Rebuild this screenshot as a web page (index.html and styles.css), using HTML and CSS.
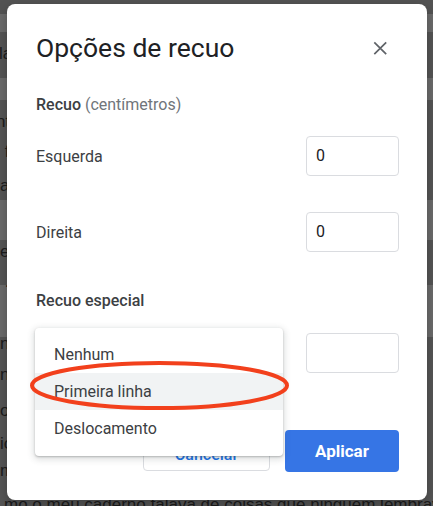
FILE: index.html
```html
<!DOCTYPE html>
<html lang="pt">
<head>
<meta charset="utf-8">
<title>Opções de recuo</title>
<link rel="stylesheet" href="styles.css">
</head>
<body>
<div class="doc">
  <div class="doc-col doc-left">
    <div class="frag f-la">la</div>
    <div class="frag f-t">nt</div>
    <div class="frag f-f">&nbsp;f</div>
    <div class="frag f-a">a</div>
    <div class="frag f-e">e</div>
    <div class="frag f-dot">&nbsp;.</div>
    <div class="frag f-nc">nc</div>
    <div class="frag f-nt">nt</div>
    <div class="frag f-or">or</div>
    <div class="frag f-ic">ic</div>
    <div class="frag f-m">m</div>
    <div class="frag f-last">mo o meu caderno falava de coisas que ninguém lembrava</div>
  </div>
  <div class="doc-col doc-right">
    <div class="frag r-e">en</div>
    <div class="frag r-i">ir</div>
    <div class="frag r-el">el</div>
    <div class="frag r-a">á</div>
    <div class="frag r-es">es</div>
  </div>
</div>

<div class="dialog" role="dialog" aria-label="Opções de recuo">
  <div class="dialog-header">
    <h1 class="dialog-title">Opções de recuo</h1>
    <span class="close-btn" aria-label="Fechar">
      <svg width="24" height="24" viewBox="0 0 24 24"><path d="M6.3 6.3 L18.2 18.2 M18.2 6.3 L6.3 18.2" stroke="#5f6368" stroke-width="1.7" fill="none"/></svg>
    </span>
  </div>

  <div class="section-label"><span class="strong">Recuo</span> <span class="muted">(centímetros)</span></div>

  <div class="field-row first-row">
    <span class="field-label">Esquerda</span>
    <div class="num-input">0</div>
  </div>

  <div class="field-row second-row">
    <span class="field-label">Direita</span>
    <div class="num-input">0</div>
  </div>

  <div class="section-label special-label"><span class="strong">Recuo especial</span></div>

  <div class="field-row third-row">
    <div class="select-box"></div>
    <div class="num-input"></div>
  </div>

  <div class="actions">
    <button class="btn btn-cancel">Cancelar</button>
    <button class="btn btn-apply">Aplicar</button>
  </div>

  <div class="menu">
    <div class="menu-item">Nenhum</div>
    <div class="menu-item selected">Primeira linha</div>
    <div class="menu-item">Deslocamento</div>
  </div>

  <svg class="highlight-ring" width="267" height="60" viewBox="0 0 267 60">
    <ellipse cx="133.5" cy="30.5" rx="127.5" ry="22.5" fill="none" stroke="#f2401c" stroke-width="4"/>
  </svg>
</div>
</body>
</html>
```

FILE: styles.css
```css
* { box-sizing: border-box; }

html, body {
  margin: 0;
  padding: 0;
}

body {
  width: 433px;
  height: 506px;
  overflow: hidden;
  background: #6b6b6b;
  font-family: Roboto, "Liberation Sans", Arial, sans-serif;
}

/* dimmed document behind the dialog */
.doc {
  display: flex;
  height: 506px;
  overflow: hidden;
}

.doc-col {
  flex: 1 1 0;
  display: flex;
  flex-direction: column;
  font-family: "Liberation Sans", Arial, sans-serif;
  font-size: 17px;
  line-height: 20px;
  color: #1c1c1c;
  white-space: nowrap;
}

.doc-left {
  background: linear-gradient(to bottom,
    #535353 0, #535353 14px,
    #6b6b6b 14px, #6b6b6b 32px,
    #555555 32px, #555555 78px,
    #6b6b6b 78px, #6b6b6b 100px,
    #555555 100px, #555555 200px,
    #6b6b6b 200px, #6b6b6b 240px,
    #555555 240px, #555555 285px,
    #6b6b6b 285px, #6b6b6b 337px,
    #555555 337px, #555555 506px);
}

.doc-right {
  padding-left: 211px;
  background: linear-gradient(to bottom,
    #6e6e6e 0, #6e6e6e 98px,
    #575757 98px, #575757 180px,
    #6e6e6e 180px, #6e6e6e 230px,
    #575757 230px, #575757 305px,
    #6e6e6e 305px, #6e6e6e 506px);
}

.f-la { margin-top: 44px; margin-left: -1px; }
.f-t { margin-top: 48px; margin-left: -4px; }
.f-f { margin-top: 10px; }
.f-a { margin-top: 14px; }
.f-e { margin-top: 46px; }
.f-dot { margin-top: 10px; }
.f-nc { margin-top: 42px; }
.f-nt { margin-top: 11px; }
.f-or { margin-top: 16px; }
.f-ic { margin-top: 13px; }
.f-m { margin-top: 7px; }
.f-last { margin-top: 14px; margin-left: 4px; }

.r-e { margin-top: 112px; }
.r-i { margin-top: 10px; }
.r-el { margin-top: 80px; }
.r-a { margin-top: 10px; }
.r-es { margin-top: 142px; }

/* dialog */
.dialog {
  position: absolute;
  left: 7px;
  top: 4px;
  width: 420px;
  height: 496px;
  background: #ffffff;
  border-radius: 8px;
  box-shadow: 0 4px 12px rgba(0, 0, 0, 0.25);
  padding: 28px 28px 28px 29px;
  display: flex;
  flex-direction: column;
}

.dialog-header {
  display: flex;
  align-items: center;
  justify-content: space-between;
  height: 32px;
}

.dialog-title {
  margin: 0;
  font-size: 26.5px;
  line-height: 32px;
  font-weight: 400;
  color: #202124;
}

.close-btn {
  display: flex;
  width: 24px;
  height: 24px;
  margin-right: 7px;
}

.section-label {
  margin-top: 29px;
  font-size: 16px;
  line-height: 24px;
  color: #3c4043;
}

.section-label .strong {
  font-weight: 500;
  color: #3c4043;
}

.section-label .muted {
  color: #70757a;
}

.special-label {
  margin-top: 37px;
}

.field-row {
  display: flex;
  align-items: center;
  justify-content: space-between;
  height: 40px;
}

.first-row { margin-top: 19px; }
.second-row { margin-top: 36px; }
.third-row { margin-top: 20px; }

.field-label {
  font-size: 16px;
  color: #3c4043;
}

.num-input {
  width: 93px;
  height: 40px;
  border: 1px solid #dadce0;
  border-radius: 4px;
  padding-left: 9px;
  font-size: 16px;
  line-height: 38px;
  color: #202124;
}

.select-box {
  width: 247px;
  height: 40px;
  border: 1px solid #dadce0;
  border-radius: 4px;
}

.actions {
  margin-top: 57px;
  display: flex;
  justify-content: flex-end;
  gap: 15px;
}

.btn {
  font-family: Roboto, "Liberation Sans", Arial, sans-serif;
  border-radius: 4px;
  cursor: pointer;
}

.btn-cancel {
  width: 127px;
  height: 41px;
  padding-top: 9px;
  background: #ffffff;
  border: 1px solid #dadce0;
  color: #1a73e8;
  font-size: 16px;
  font-weight: 500;
}

.btn-apply {
  width: 114px;
  height: 42px;
  background: #3675e5;
  border: none;
  color: #ffffff;
  font-size: 17px;
  font-weight: 700;
}

/* open dropdown */
.menu {
  position: absolute;
  left: 28px;
  top: 324px;
  width: 248px;
  padding: 8px 0 9px;
  background: #ffffff;
  border-radius: 4px;
  box-shadow: 0 1px 2px rgba(60, 64, 67, 0.3), 0 2px 6px 2px rgba(60, 64, 67, 0.15);
}

.menu-item {
  height: 37px;
  padding-left: 19px;
  display: flex;
  align-items: center;
  font-size: 16px;
  color: #3c4043;
}

.menu-item.selected {
  background: #f1f3f4;
}

.highlight-ring {
  position: absolute;
  left: 19px;
  top: 351px;
}
```
